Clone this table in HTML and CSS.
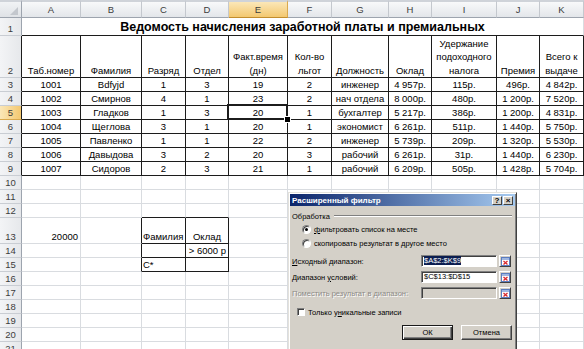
FILE: index.html
```html
<!DOCTYPE html>
<html lang="ru">
<head>
<meta charset="utf-8">
<title>Ведомость</title>
<link rel="stylesheet" href="styles.css">
</head>
<body>
<table class="sheet">
  <colgroup>
    <col class="w-rh"><col class="w-a"><col class="w-b"><col class="w-c"><col class="w-d"><col class="w-e"><col class="w-f"><col class="w-g"><col class="w-h"><col class="w-i"><col class="w-j"><col class="w-k">
  </colgroup>
  <tr class="r-hdr">
    <th class="corner"></th><th class="ch">A</th><th class="ch">B</th><th class="ch">C</th><th class="ch">D</th><th class="ch sel">E</th><th class="ch">F</th><th class="ch">G</th><th class="ch">H</th><th class="ch">I</th><th class="ch">J</th><th class="ch">K</th>
  </tr>
  <tr class="r-title">
    <th class="rh">1</th><td colspan="11" class="title">Ведомость начисления заработной платы и премиальных</td>
  </tr>
  <tr class="r-head">
    <th class="rh bk">2</th>
    <td class="b wrap">Таб.номер</td><td class="b wrap">Фамилия</td><td class="b wrap">Разряд</td><td class="b wrap">Отдел</td><td class="b wrap">Факт.время (дн)</td><td class="b wrap">Кол-во льгот</td><td class="b wrap">Должность</td><td class="b wrap">Оклад</td><td class="b wrap">Удержание подоходного налога</td><td class="b wrap">Премия</td><td class="b wrap">Всего к выдаче</td>
  </tr>
  <tr class="r">
    <th class="rh bk">3</th><td class="b">1001</td><td class="b">Bdfyjd</td><td class="b">1</td><td class="b">3</td><td class="b">19</td><td class="b">2</td><td class="b">инженер</td><td class="b">4&nbsp;957р.</td><td class="b">115р.</td><td class="b">496р.</td><td class="b">4&nbsp;842р.</td>
  </tr>
  <tr class="r">
    <th class="rh bk">4</th><td class="b">1002</td><td class="b">Смирнов</td><td class="b">4</td><td class="b">1</td><td class="b">23</td><td class="b">2</td><td class="b">нач отдела</td><td class="b">8&nbsp;000р.</td><td class="b">480р.</td><td class="b">1&nbsp;200р.</td><td class="b">7&nbsp;520р.</td>
  </tr>
  <tr class="r">
    <th class="rh bk sel">5</th><td class="b">1003</td><td class="b">Гладков</td><td class="b">1</td><td class="b">3</td><td class="b act">20</td><td class="b">1</td><td class="b">бухгалтер</td><td class="b">5&nbsp;217р.</td><td class="b">386р.</td><td class="b">1&nbsp;200р.</td><td class="b">4&nbsp;831р.</td>
  </tr>
  <tr class="r">
    <th class="rh bk">6</th><td class="b">1004</td><td class="b">Щеглова</td><td class="b">3</td><td class="b">1</td><td class="b">20</td><td class="b">1</td><td class="b">экономист</td><td class="b">6&nbsp;261р.</td><td class="b">511р.</td><td class="b">1&nbsp;440р.</td><td class="b">5&nbsp;750р.</td>
  </tr>
  <tr class="r">
    <th class="rh bk">7</th><td class="b">1005</td><td class="b">Павленко</td><td class="b">1</td><td class="b">1</td><td class="b">22</td><td class="b">2</td><td class="b">инженер</td><td class="b">5&nbsp;739р.</td><td class="b">209р.</td><td class="b">1&nbsp;320р.</td><td class="b">5&nbsp;530р.</td>
  </tr>
  <tr class="r">
    <th class="rh bk">8</th><td class="b">1006</td><td class="b">Давыдова</td><td class="b">3</td><td class="b">2</td><td class="b">20</td><td class="b">3</td><td class="b">рабочий</td><td class="b">6&nbsp;261р.</td><td class="b">31р.</td><td class="b">1&nbsp;440р.</td><td class="b">6&nbsp;230р.</td>
  </tr>
  <tr class="r">
    <th class="rh bk">9</th><td class="b">1007</td><td class="b">Сидоров</td><td class="b">2</td><td class="b">3</td><td class="b">21</td><td class="b">1</td><td class="b">рабочий</td><td class="b">6&nbsp;209р.</td><td class="b">505р.</td><td class="b">1&nbsp;428р.</td><td class="b">5&nbsp;704р.</td>
  </tr>
  <tr class="r">
    <th class="rh">10</th><td></td><td></td><td></td><td></td><td></td><td></td><td></td><td></td><td></td><td></td><td></td>
  </tr>
  <tr class="r">
    <th class="rh">11</th><td></td><td></td><td></td><td></td><td></td><td></td><td></td><td></td><td></td><td></td><td></td>
  </tr>
  <tr class="r">
    <th class="rh">12</th><td></td><td></td><td class="bb"></td><td class="bb"></td><td></td><td></td><td></td><td></td><td></td><td></td><td></td>
  </tr>
  <tr class="r13">
    <th class="rh">13</th><td class="num">20000</td><td class="br"></td><td class="b left">Фамилия</td><td class="b">Оклад</td><td></td><td></td><td></td><td></td><td></td><td></td><td></td>
  </tr>
  <tr class="r">
    <th class="rh">14</th><td></td><td class="br"></td><td class="b"></td><td class="b num">&gt; 6000 р</td><td></td><td></td><td></td><td></td><td></td><td></td><td></td>
  </tr>
  <tr class="r">
    <th class="rh">15</th><td></td><td class="br"></td><td class="b left">С*</td><td class="b"></td><td></td><td></td><td></td><td></td><td></td><td></td><td></td>
  </tr>
  <tr class="r">
    <th class="rh">16</th><td></td><td></td><td></td><td></td><td></td><td></td><td></td><td></td><td></td><td></td><td></td>
  </tr>
  <tr class="r">
    <th class="rh">17</th><td></td><td></td><td></td><td></td><td></td><td></td><td></td><td></td><td></td><td></td><td></td>
  </tr>
  <tr class="r">
    <th class="rh">18</th><td></td><td></td><td></td><td></td><td></td><td></td><td></td><td></td><td></td><td></td><td></td>
  </tr>
  <tr class="r">
    <th class="rh">19</th><td></td><td></td><td></td><td></td><td></td><td></td><td></td><td></td><td></td><td></td><td></td>
  </tr>
  <tr class="r">
    <th class="rh">20</th><td></td><td></td><td></td><td></td><td></td><td></td><td></td><td></td><td></td><td></td><td></td>
  </tr>
  <tr class="r">
    <th class="rh">21</th><td></td><td></td><td></td><td></td><td></td><td></td><td></td><td></td><td></td><td></td><td></td>
  </tr>
</table>

<div class="dlg">
  <div class="dlg-title">
    <span class="dlg-caption">Расширенный фильтр</span>
    <span class="tbtns"><span class="tbtn">?</span><span class="tbtn">×</span></span>
  </div>
  <div class="dlg-body">
    <div class="group"><span>Обработка</span><span class="etch"></span></div>
    <div class="opt"><span class="radio on"></span><span><u>ф</u>ильтровать список на месте</span></div>
    <div class="opt"><span class="radio"></span><span>скопировать результат в <u>д</u>ругое место</span></div>
    <div class="field f1">
      <span class="lbl"><u>И</u>сходный диапазон:</span>
      <span class="inp"><span class="seltxt">$A$2:$K$9</span></span>
      <span class="rbtn"><svg width="9" height="9" viewBox="0 0 9 9"><rect x="0.5" y="0.5" width="8" height="8" fill="#fff" stroke="#5a7cc0"/><rect x="1" y="1" width="7" height="2" fill="#9fb6e0"/><path d="M2.5 4 L6.5 7.5 M6.5 4 L2.5 7.5" stroke="#d8282c" stroke-width="1.3"/></svg></span>
    </div>
    <div class="field">
      <span class="lbl">Диапазон <u>у</u>словий:</span>
      <span class="inp">$C$13:$D$15</span>
      <span class="rbtn"><svg width="9" height="9" viewBox="0 0 9 9"><rect x="0.5" y="0.5" width="8" height="8" fill="#fff" stroke="#5a7cc0"/><rect x="1" y="1" width="7" height="2" fill="#9fb6e0"/><path d="M2.5 4 L6.5 7.5 M6.5 4 L2.5 7.5" stroke="#d8282c" stroke-width="1.3"/></svg></span>
    </div>
    <div class="field">
      <span class="lbl dis">Поместить результат в диапазон:</span>
      <span class="inp off"></span>
      <span class="rbtn"><svg width="9" height="9" viewBox="0 0 9 9"><rect x="0.5" y="0.5" width="8" height="8" fill="#fff" stroke="#5a7cc0"/><rect x="1" y="1" width="7" height="2" fill="#9fb6e0"/><path d="M2.5 4 L6.5 7.5 M6.5 4 L2.5 7.5" stroke="#d8282c" stroke-width="1.3"/></svg></span>
    </div>
    <div class="chkrow"><span class="chk"></span><span>Только у<u>н</u>икальные записи</span></div>
    <div class="btns"><span class="btn def">ОК</span><span class="btn">Отмена</span></div>
  </div>
</div>
</body>
</html>
```

FILE: styles.css
```css
* { box-sizing: border-box; }
html, body { margin: 0; padding: 0; }
body {
  width: 584px;
  height: 349px;
  overflow: hidden;
  background: #fff;
  font-family: "Liberation Sans", Arial, sans-serif;
  position: relative;
}

/* ---------- sheet ---------- */
.sheet {
  border-collapse: separate;
  border-spacing: 0;
  table-layout: fixed;
  width: 584px;
  font-size: 9.5px;
  color: #000;
}
.w-rh { width: 22px; }
.w-a { width: 59px; }
.w-b { width: 61px; }
.w-c { width: 44px; }
.w-d { width: 43px; }
.w-e { width: 59px; }
.w-f { width: 44px; }
.w-g { width: 57px; }
.w-h { width: 43px; }
.w-i { width: 65px; }
.w-j { width: 43px; }
.w-k { width: 44px; }

.sheet th, .sheet td {
  padding: 0 2px;
  white-space: nowrap;
  vertical-align: bottom;
  line-height: 12px;
  font-weight: normal;
  text-align: center;
}
.sheet td {
  border-right: 1px solid #d9dce0;
  border-bottom: 1px solid #d9dce0;
}

.r-hdr { height: 18px; }
.r-title { height: 18px; }
.r-head { height: 42px; }
.r { height: 14px; }
.r13 { height: 26px; }

.corner {
  position: relative;
  background: linear-gradient(#f1f3f5, #dfe2e6);
  border-top: 2px solid #cfd3d9;
  border-right: 1px solid #9da4ae;
  border-bottom: 1px solid #9da4ae;
}
.corner::after {
  content: "";
  position: absolute;
  right: 3px;
  bottom: 2px;
  border-left: 8px solid transparent;
  border-bottom: 8px solid #c3c7cd;
}
.sheet .ch {
  color: #3c3c3c;
  vertical-align: middle;
  background: linear-gradient(#f8f9fa, #e3e6ea);
  border-top: 2px solid #cfd3d9;
  border-right: 1px solid #c4c8ce;
  border-bottom: 1px solid #9da4ae;
}
.sheet .ch.sel {
  background: linear-gradient(#fbe7b8, #f3c870);
  border-right-color: #d9a94e;
  border-bottom-color: #c28d2e;
}
.sheet .rh {
  color: #3c3c3c;
  background: linear-gradient(90deg, #f3f4f6, #e6e8eb);
  border-right: 1px solid #9da4ae;
  border-bottom: 1px solid #c9cdd3;
  padding: 0;
}
.sheet .rh.bk { border-right-color: #1c1c1c; }
.sheet .rh.sel {
  background: linear-gradient(90deg, #fbe7b8, #f3c870);
  border-bottom-color: #d9a94e;
}

.sheet td.title {
  font-size: 12.5px;
  font-weight: bold;
  line-height: 16px;
  border-bottom-color: #1c1c1c;
}
.sheet td.b { border-right-color: #1c1c1c; border-bottom-color: #1c1c1c; }
.sheet td.bb { border-bottom-color: #1c1c1c; }
.sheet td.br { border-right-color: #1c1c1c; }
.sheet td.wrap { white-space: normal; line-height: 13.5px; padding-bottom: 0; }
.sheet td.num { text-align: right; }
.sheet td.left { text-align: left; padding-left: 1px; }

.act { position: relative; }
.act::after {
  content: "";
  position: absolute;
  left: -2px; top: -2px; right: -1px; bottom: -1px;
  border: 2px solid #1c1c1c;
}
.act::before {
  content: "";
  position: absolute;
  right: -4px;
  bottom: -4px;
  width: 5px;
  height: 5px;
  background: #000;
  border: 1px solid #fff;
  z-index: 1;
}

/* ---------- dialog ---------- */
.dlg {
  position: absolute;
  left: 288px;
  top: 192px;
  width: 229px;
  height: 170px;
  background: #d4d0c8;
  border: 1px solid;
  border-color: #e4e2dc #404040 #404040 #e4e2dc;
  box-shadow: inset 1px 1px #fff, inset -1px -1px #808080;
  padding: 1px;
  font-size: 7.5px;
  color: #000;
}
.dlg-title {
  height: 12px;
  display: flex;
  align-items: center;
  justify-content: space-between;
  background: linear-gradient(90deg, #0a246a, #a6caf0);
  padding: 0 2px;
}
.dlg-caption {
  color: #fff;
  font-weight: bold;
  font-size: 8px;
}
.tbtns { display: flex; gap: 1px; }
.tbtn {
  width: 10px;
  height: 9px;
  background: #d4d0c8;
  border: 1px solid;
  border-color: #fff #404040 #404040 #fff;
  font-size: 8px;
  font-weight: bold;
  line-height: 7px;
  text-align: center;
  color: #000;
}
.dlg-body {
  padding: 4px 3px 0 2px;
  display: flex;
  flex-direction: column;
}
.group {
  height: 12px;
  display: flex;
  align-items: center;
  gap: 4px;
}
.etch {
  flex: 1;
  height: 2px;
  border-top: 1px solid #808080;
  border-bottom: 1px solid #fff;
}
.opt {
  height: 14px;
  display: flex;
  align-items: center;
  gap: 3px;
  padding-left: 10px;
}
.radio {
  width: 9px;
  height: 9px;
  border-radius: 50%;
  background: #fff;
  border: 1px solid;
  border-color: #808080 #fff #fff #808080;
  box-shadow: inset 1px 1px #404040;
  display: flex;
  align-items: center;
  justify-content: center;
}
.radio.on::after {
  content: "";
  width: 3px;
  height: 3px;
  border-radius: 50%;
  background: #000;
}
.field {
  height: 12px;
  margin-top: 4px;
  display: flex;
  align-items: center;
}
.field.f1 { margin-top: 5px; }
.lbl { width: 129px; }
.lbl.dis { color: #8c8a86; text-shadow: 1px 1px #fff; }
.inp {
  width: 76px;
  height: 12px;
  background: #fff;
  border: 1px solid;
  border-color: #808080 #fff #fff #808080;
  box-shadow: inset 1px 1px #404040;
  padding-left: 2px;
  line-height: 10px;
  white-space: nowrap;
}
.inp.off { background: #d4d0c8; }
.seltxt { background: #0b1d50; color: #fff; }
.rbtn {
  margin-left: 2px;
  width: 12px;
  height: 12px;
  background: #d4d0c8;
  border: 1px solid;
  border-color: #fff #404040 #404040 #fff;
  display: flex;
  align-items: center;
  justify-content: center;
}
.chkrow {
  margin-top: 7px;
  height: 12px;
  display: flex;
  align-items: center;
  gap: 3px;
  padding-left: 5px;
}
.chk {
  width: 8px;
  height: 8px;
  background: #fff;
  border: 1px solid;
  border-color: #808080 #fff #fff #808080;
  box-shadow: inset 1px 1px #404040;
}
.btns {
  margin-top: 7px;
  display: flex;
  justify-content: flex-end;
  gap: 8px;
}
.btn {
  width: 51px;
  height: 15px;
  background: #d4d0c8;
  border: 1px solid;
  border-color: #fff #404040 #404040 #fff;
  box-shadow: inset -1px -1px #808080;
  text-align: center;
  line-height: 13px;
}
.btn.def {
  border-color: #1a1a1a;
  box-shadow: inset 1px 1px #fff, inset -1px -1px #404040, inset -2px -2px #808080;
}
```
